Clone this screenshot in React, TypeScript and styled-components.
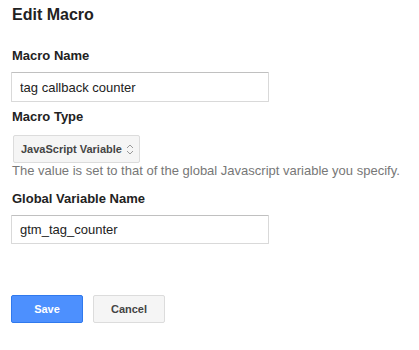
import styled, { createGlobalStyle } from "styled-components";

const FONT = `"Liberation Sans", Arial, sans-serif`;

const GlobalStyle = createGlobalStyle`
  body {
    margin: 0;
    background: #fff;
    font-family: ${FONT};
    color: #222;
  }
`;

const Page = styled.div`
  padding: 6px 0 0 12px;
  width: 407px;
`;

const Title = styled.h2`
  margin: 0;
  font-size: 16px;
  line-height: 18px;
  font-weight: bold;
  color: #222;
`;

const Field = styled.div<{ $top: number }>`
  display: flex;
  flex-direction: column;
  align-items: flex-start;
  margin-top: ${({ $top }) => $top}px;
`;

const Label = styled.label<{ $gap?: number }>`
  font-size: 13px;
  line-height: 16px;
  font-weight: bold;
  color: #222;
  margin-bottom: ${({ $gap }) => $gap ?? 8}px;
`;

const TextInput = styled.input<{ $h: number }>`
  box-sizing: border-box;
  margin-left: -1px;
  width: 258px;
  height: ${({ $h }) => $h}px;
  padding: 0 8px;
  border: 1px solid #d9d9d9;
  border-top-color: #c0c0c0;
  border-radius: 1px;
  font-family: ${FONT};
  font-size: 13px;
  color: #222;
  outline: none;
`;

const Select = styled.div`
  box-sizing: border-box;
  display: flex;
  align-items: center;
  justify-content: space-between;
  margin-left: 1px;
  width: 127px;
  height: 28px;
  padding: 0 5px 0 7px;
  background: #f5f5f5;
  border: 1px solid #dcdcdc;
  border-radius: 2px;
  font-size: 11px;
  font-weight: bold;
  color: #444;
  white-space: nowrap;

  svg {
    flex-shrink: 0;
  }
`;

const Help = styled.div`
  font-size: 13px;
  line-height: 16px;
  color: #777;
`;

const Actions = styled.div`
  display: flex;
  gap: 10px;
  margin-top: 51px;
  margin-left: -1px;
`;

const Button = styled.button<{ $primary?: boolean }>`
  box-sizing: border-box;
  width: 72px;
  height: 28px;
  border-radius: 2px;
  font-family: ${FONT};
  font-size: 11px;
  font-weight: bold;
  cursor: pointer;
  background: ${({ $primary }) => ($primary ? "#4d90fe" : "#f5f5f5")};
  border: 1px solid ${({ $primary }) => ($primary ? "#3079ed" : "#dcdcdc")};
  color: ${({ $primary }) => ($primary ? "#fff" : "#444")};
`;

const Arrows = () => (
  <svg width="8" height="13" viewBox="0 0 8 13" fill="none" stroke="#999" strokeWidth="1">
    <path d="M1 5 L4 2 L7 5" />
    <path d="M1 8 L4 11 L7 8" />
  </svg>
);

export default function App() {
  return (
    <>
      <GlobalStyle />
      <Page>
        <Title>Edit Macro</Title>
        <Field $top={24}>
          <Label>Macro Name</Label>
          <TextInput $h={30} defaultValue="tag callback counter" />
        </Field>
        <Field $top={7}>
          <Label $gap={10}>Macro Type</Label>
          <Select>
            <span>JavaScript Variable</span>
            <Arrows />
          </Select>
          <Help>The value is set to that of the global Javascript variable you specify.</Help>
        </Field>
        <Field $top={12}>
          <Label>Global Variable Name</Label>
          <TextInput $h={29} defaultValue="gtm_tag_counter" />
        </Field>
        <Actions>
          <Button $primary>Save</Button>
          <Button>Cancel</Button>
        </Actions>
      </Page>
    </>
  );
}
